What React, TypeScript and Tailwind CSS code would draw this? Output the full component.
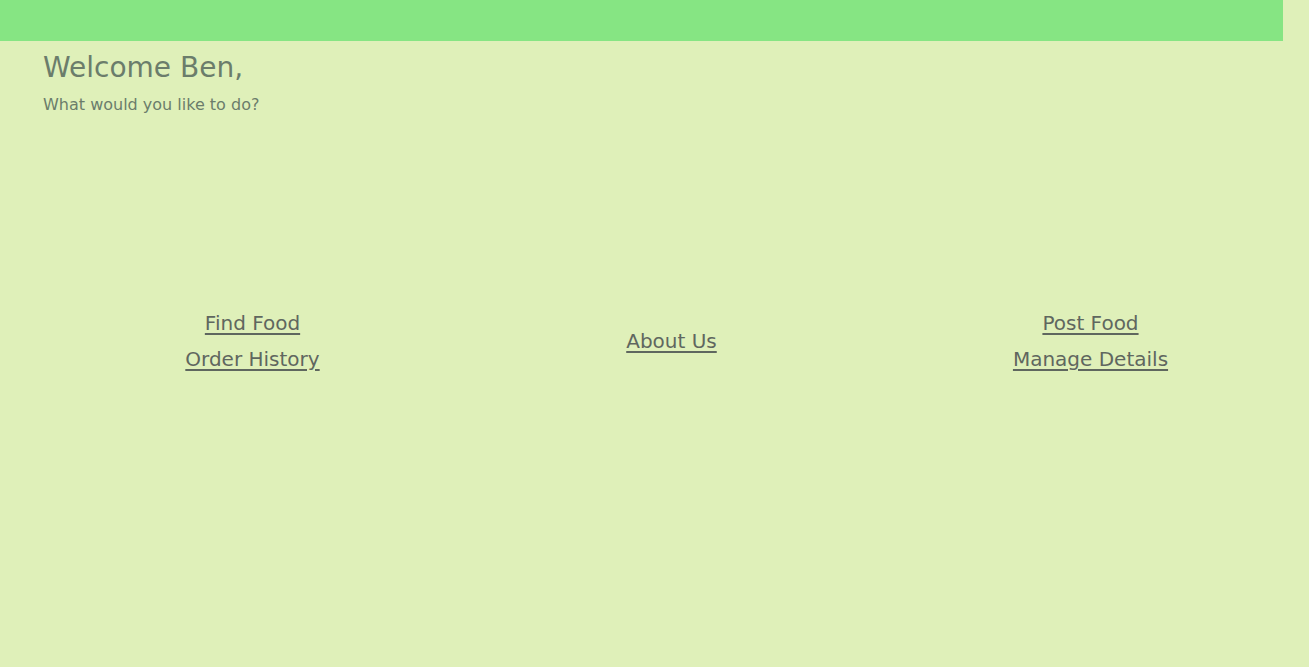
import React from 'react';

const font = { fontFamily: '"Century Gothic", "DejaVu Sans", sans-serif' };

const NavLink = ({ label }: { label: string }) => (
  <a href="#" className="text-[20px] leading-[36px] text-[#5f675f] underline decoration-[2px] underline-offset-[3px]">
    {label}
  </a>
);

const App = () => {
  return (
    <div className="min-h-[667px] w-full bg-[#dff0b9]" style={font}>
      <div className="h-[41px] w-[1283px] bg-[#86e583]" />
      <div className="pl-[43px]">
        <h1 className="mt-[9px] text-[28px] leading-[36px] text-[#6b7d6b]">Welcome Ben,</h1>
        <p className="mt-[9px] text-[16px] leading-[20px] text-[#6b7d6b]">What would you like to do?</p>
        <div className="mt-[190px] flex">
          <div className="flex w-[419px] flex-col items-center">
            <NavLink label="Find Food" />
            <NavLink label="Order History" />
          </div>
          <div className="flex w-[419px] flex-col items-center justify-center">
            <NavLink label="About Us" />
          </div>
          <div className="flex w-[419px] flex-col items-center">
            <NavLink label="Post Food" />
            <NavLink label="Manage Details" />
          </div>
        </div>
      </div>
    </div>
  );
};

export default App;
